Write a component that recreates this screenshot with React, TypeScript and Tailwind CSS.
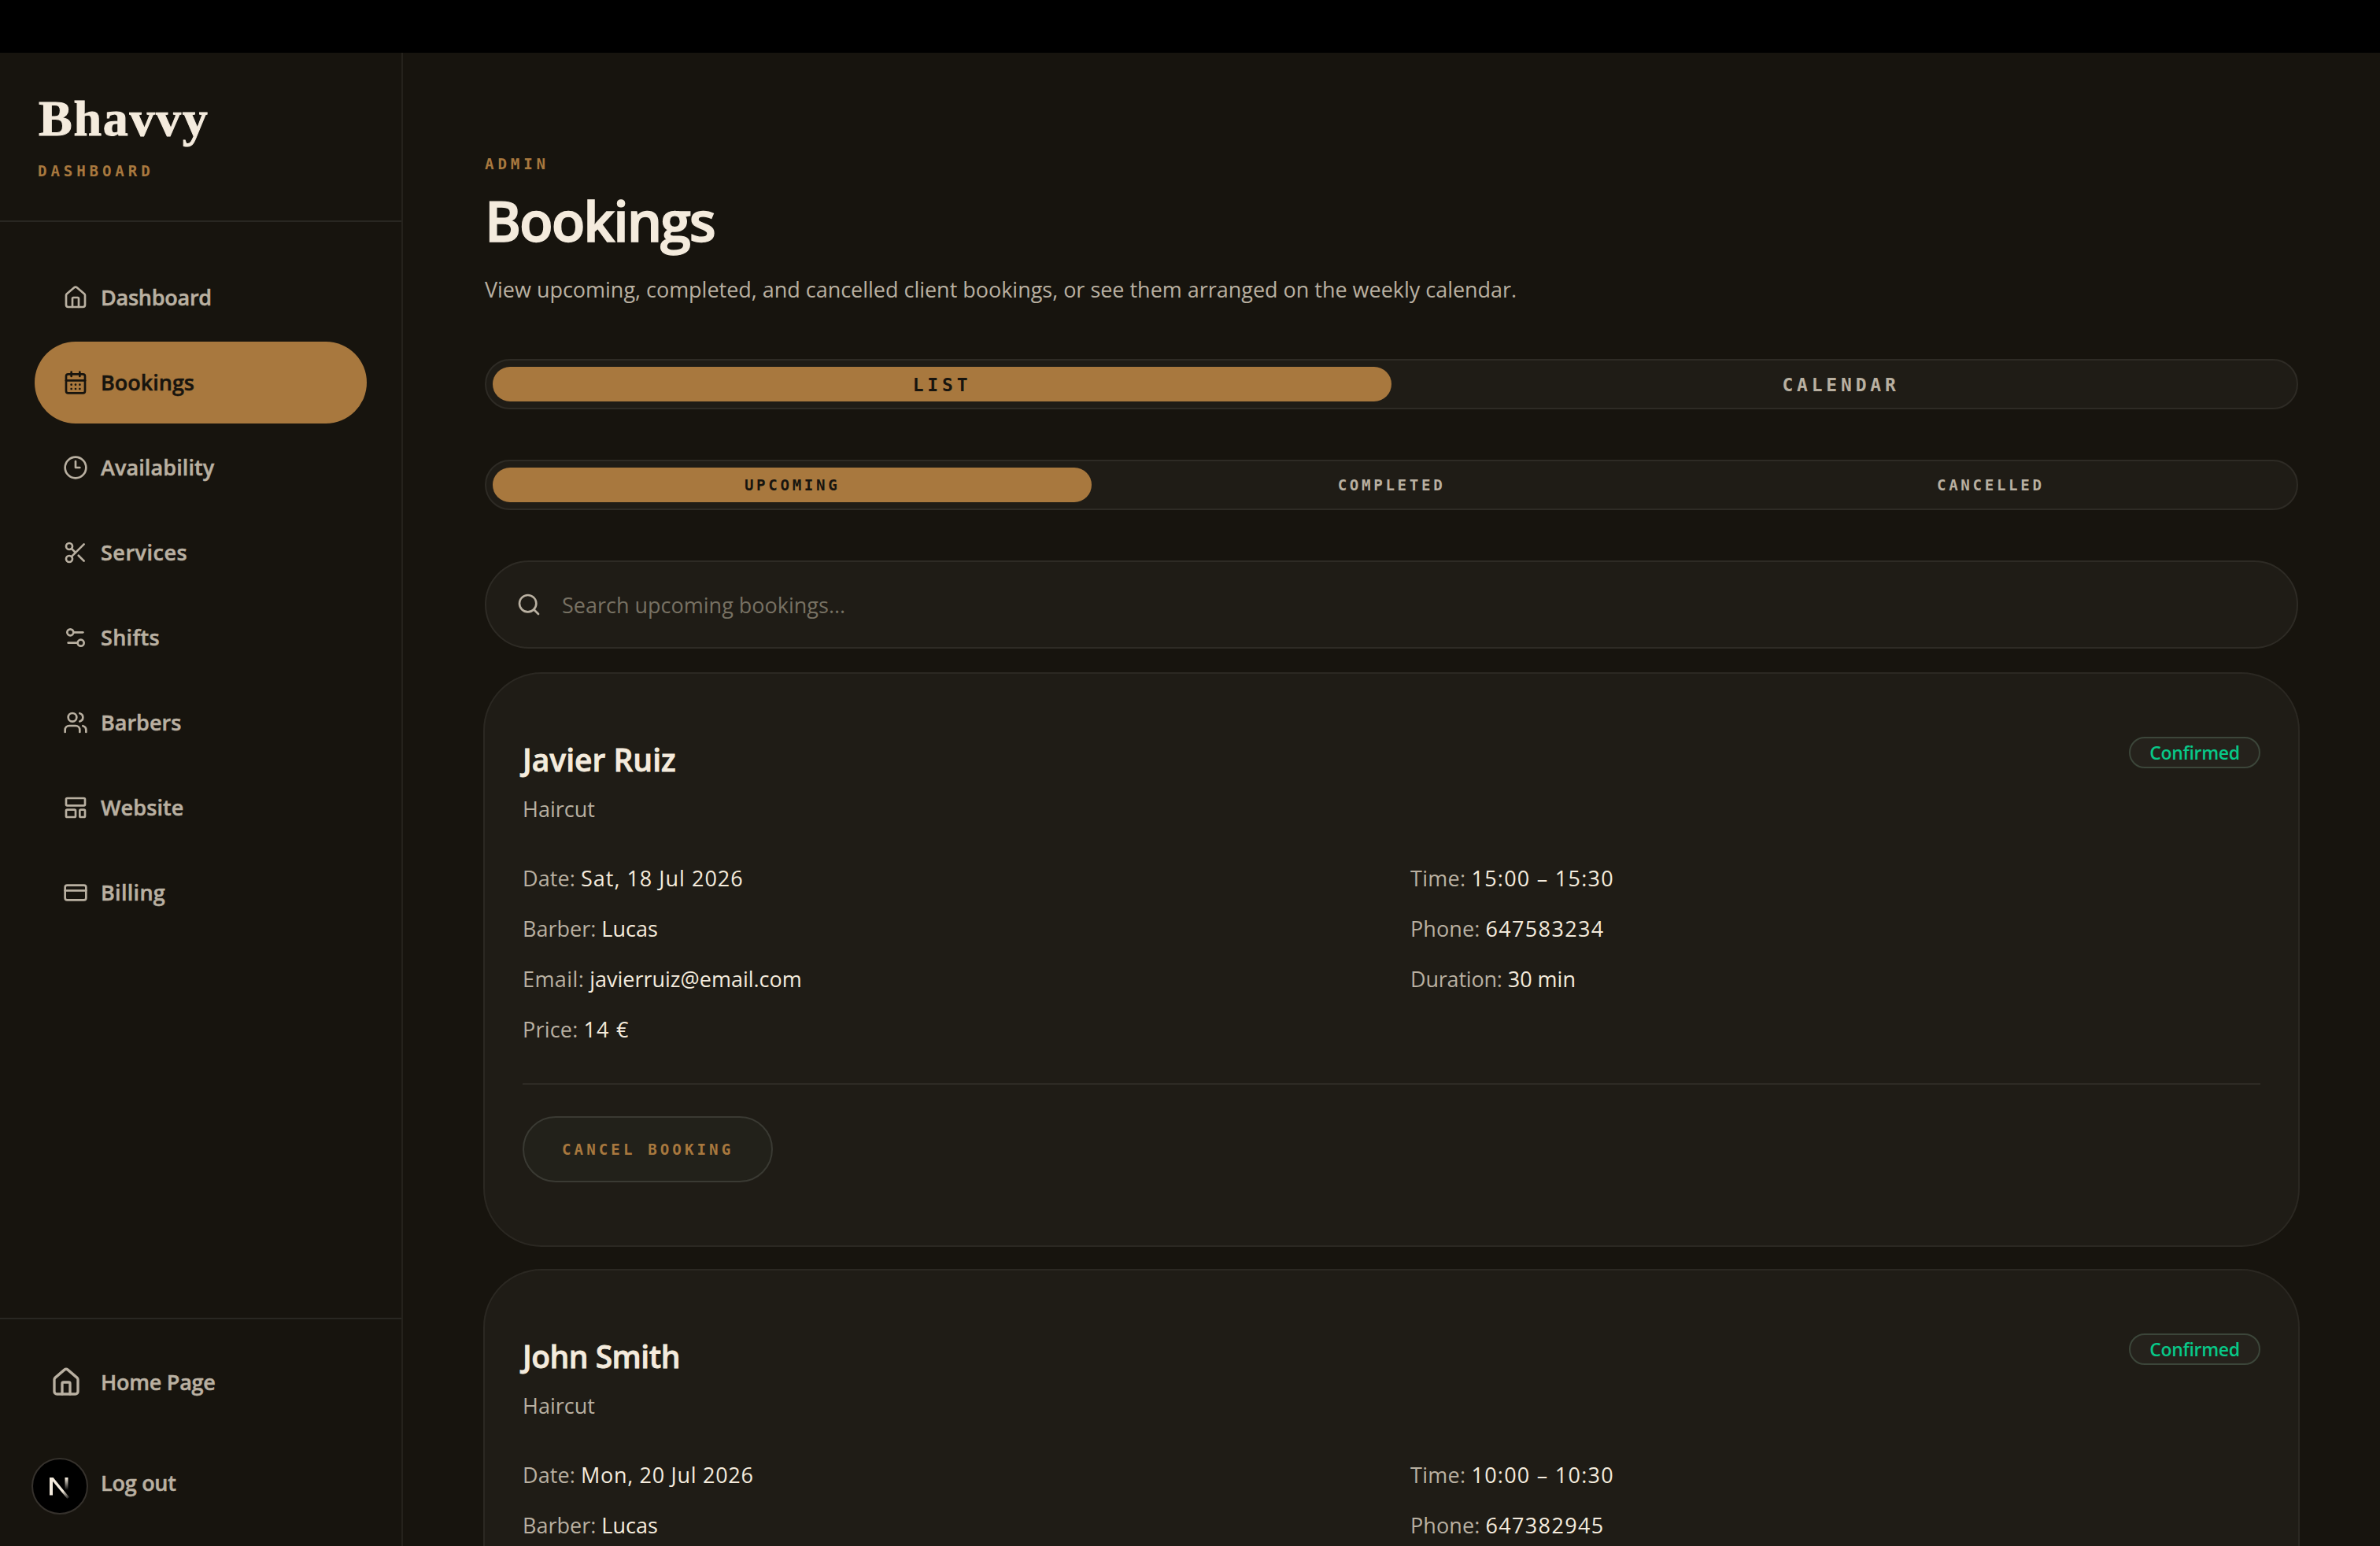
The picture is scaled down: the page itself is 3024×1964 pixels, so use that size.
import React from "react";
import {
  House,
  CalendarDays,
  Clock3,
  Scissors,
  Settings2,
  Users,
  LayoutTemplate,
  CreditCard,
  Search,
} from "lucide-react";

const mono = "font-['DejaVu_Sans_Mono','Courier_New',monospace] font-bold uppercase whitespace-nowrap";

const nav = [
  { label: "Dashboard", Icon: House, track: "tracking-[-0.25px]" },
  { label: "Bookings", Icon: CalendarDays, track: "tracking-[0px]", active: true },
  { label: "Availability", Icon: Clock3, track: "tracking-[0.1px]" },
  { label: "Services", Icon: Scissors, track: "tracking-[0.5px]" },
  { label: "Shifts", Icon: Settings2, track: "tracking-[0.3px]" },
  { label: "Barbers", Icon: Users, track: "tracking-[0px]" },
  { label: "Website", Icon: LayoutTemplate, track: "tracking-[0.1px]" },
  { label: "Billing", Icon: CreditCard, track: "tracking-[0.3px]" },
];

const bookings = [
  {
    name: "Javier Ruiz",
    nameTrack: "tracking-[0px]",
    service: "Haircut",
    details: [
      ["Date:", "Sat, 18 Jul 2026", "tracking-[1px]", "tracking-[0.1px]"],
      ["Time:", "15:00 – 15:30", "tracking-[1.25px]", "tracking-[0.3px]"],
      ["Barber:", "Lucas", "tracking-[0px]", "tracking-[0px]"],
      ["Phone:", "647583234", "tracking-[1.35px]", "tracking-[0.1px]"],
      ["Email:", "javierruiz@email.com", "tracking-[0px]", "tracking-[0.4px]"],
      ["Duration:", "30 min", "tracking-[0px]", "tracking-[-0.2px]"],
      ["Price:", "14 €", "tracking-[1.2px]", "tracking-[0.2px]"],
    ],
  },
  {
    name: "John Smith",
    nameTrack: "tracking-[-0.5px]",
    service: "Haircut",
    details: [
      ["Date:", "Mon, 20 Jul 2026", "tracking-[0.7px]", "tracking-[0.1px]"],
      ["Time:", "10:00 – 10:30", "tracking-[1.25px]", "tracking-[0.3px]"],
      ["Barber:", "Lucas", "tracking-[0px]", "tracking-[0px]"],
      ["Phone:", "647382945", "tracking-[1.35px]", "tracking-[0.1px]"],
    ],
  },
];

function Sidebar() {
  return (
    <aside className="flex h-full w-[512px] shrink-0 flex-col border-r-2 border-[#25221c]">
      <div className="flex h-[215px] shrink-0 flex-col border-b-2 border-[#292722] pl-12">
        <div className="mt-[44px] h-[80px] pl-px whitespace-nowrap font-['Liberation_Serif',serif] text-[64px] leading-[80px] font-bold tracking-[1.7px] text-[#f4ebdd] [-webkit-text-stroke:1px_#f4ebdd]">
          Bhavvy
        </div>
        <div className={`${mono} mt-[15px] text-[19.2px] leading-[24px] tracking-[4.84px] text-[#a8783e]`}>Dashboard</div>
      </div>
      <nav className="flex flex-1 flex-col gap-1 px-11 pt-[44px]">
        {nav.map(({ label, Icon, track, active }) => (
          <a
            key={label}
            className={`flex h-[104px] items-center gap-4 rounded-full px-9 text-[27px] font-semibold whitespace-nowrap [-webkit-text-stroke:0.5px_currentColor] ${track} ${
              active ? "bg-[#a8783e] text-[#17140e]" : "text-[#b9b0a1]"
            }`}
          >
            <Icon className="size-8" strokeWidth={2} />
            {label}
          </a>
        ))}
      </nav>
      <div className="flex h-[290px] shrink-0 flex-col border-t-2 border-[#292722] px-11 pt-[28px] text-[27px] font-semibold tracking-[-0.25px] text-[#b9b0a1] [-webkit-text-stroke:0.5px_currentColor]">
        <a className="flex h-[104px] items-center gap-6 pl-5 whitespace-nowrap">
          <House className="size-10" strokeWidth={2} />
          Home Page
        </a>
        <div className="relative mt-6 flex h-[104px] items-center pl-[84px] whitespace-nowrap">
          Log out
          <div className="absolute -left-1 top-[20px] flex size-[72px] items-center justify-center rounded-full border-2 border-[#35312c] bg-black">
            <NextMark />
          </div>
        </div>
      </div>
    </aside>
  );
}

function NextMark() {
  return (
    <svg className="size-[28px] overflow-visible" viewBox="0 0 28 28" fill="none">
      <defs>
        <linearGradient id="stem" x1="0" y1="4" x2="0" y2="19" gradientUnits="userSpaceOnUse">
          <stop stopColor="#f4ebdd" />
          <stop offset="1" stopColor="#f4ebdd" stopOpacity="0" />
        </linearGradient>
        <linearGradient id="slash" x1="18" y1="20" x2="26" y2="31" gradientUnits="userSpaceOnUse">
          <stop stopColor="#f4ebdd" />
          <stop offset="1" stopColor="#f4ebdd" stopOpacity="0" />
        </linearGradient>
      </defs>
      <rect x="1" y="3" width="4" height="22.5" fill="#f4ebdd" />
      <path d="M1 3h4.6L26 28l-2.6 2L1 3z" fill="url(#slash)" />
      <rect x="20.5" y="3" width="4" height="16" fill="url(#stem)" />
    </svg>
  );
}

function Tabs({ items, size }: { items: string[]; size: string }) {
  return (
    <div className="flex h-16 items-stretch rounded-full border-2 border-[#2e2b25] bg-[#1f1c16] p-2">
      {items.map((t, i) => (
        <button
          key={t}
          className={`${mono} ${size} flex-1 rounded-full pt-[2px] ${i === 0 ? "bg-[#a8783e] text-[#17140e]" : "text-[#b9b0a1]"}`}
        >
          {t}
        </button>
      ))}
    </div>
  );
}

function BookingCard({ b }: { b: (typeof bookings)[number] }) {
  return (
    <article className="flex h-[726px] shrink-0 flex-col rounded-[72px] bg-[#1f1c16] px-12 pt-[80px] ring-2 ring-[#2b2822]">
      <div className="flex items-start justify-between">
        <div>
          <h2
            className={`${b.nameTrack} pt-px text-[39px] leading-[56px] font-semibold whitespace-nowrap text-[#f4ebdd] [-webkit-text-stroke:0.8px_#f4ebdd]`}
          >
            {b.name}
          </h2>
          <p className="mt-[15px] text-[27px] leading-[40px] text-[#b9b0a1]">{b.service}</p>
        </div>
        <span className="flex h-10 w-[167px] items-center justify-center rounded-full border-2 border-[#3c463a] bg-[#25221c] text-[23px] font-semibold tracking-[-0.3px] text-[#08c888]">
          Confirmed
        </span>
      </div>
      <dl className="mt-[48px] grid grid-cols-2 gap-x-12 gap-y-6 text-[27px] leading-[40px]">
        {b.details.map(([k, v, track, labelTrack]) => (
          <div key={k} className="flex gap-[7px] whitespace-nowrap">
            <dt className={`${labelTrack} text-[#b9b0a1]`}>{k}</dt>
            <dd className={`${track} text-[#f4ebdd]`}>{v}</dd>
          </div>
        ))}
      </dl>
      <div className="mt-[48px] border-t-2 border-[#2e2b25] pt-10">
        <button
          className={`${mono} h-[84px] rounded-full border-2 border-[#3a3a33] bg-[#22211a] px-12 pt-[2px] text-[19.2px] tracking-[4.04px] text-[#a8783e]`}
        >
          Cancel booking
        </button>
      </div>
    </article>
  );
}

export default function App() {
  return (
    <div className="flex h-[1964px] w-[3024px] flex-col overflow-hidden bg-[#17140e] font-['Open_Sans',sans-serif] antialiased">
      <div className="h-[67px] shrink-0 bg-black" />
      <div className="flex min-h-0 flex-1">
        <Sidebar />
        <main className="flex min-w-0 flex-1 flex-col overflow-hidden px-[104px] pt-[130px]">
          <p className={`${mono} text-[19.2px] leading-[24px] tracking-[4.84px] text-[#a8783e]`}>Admin</p>
          <h1 className="mt-[14px] text-[70px] leading-[90px] font-semibold tracking-[-2.1px] text-[#f4ebdd] [-webkit-text-stroke:1.4px_#f4ebdd]">
            Bookings
          </h1>
          <p className="mt-[23px] text-[27px] leading-[40px] tracking-[-0.02px] whitespace-nowrap text-[#b9b0a1]">
            View upcoming, completed, and cancelled client bookings, or see them arranged on the weekly calendar.
          </p>
          <div className="mt-[68px] flex flex-col gap-16">
            <Tabs items={["List", "Calendar"]} size="text-[23px] tracking-[4.8px]" />
            <Tabs items={["Upcoming", "Completed", "Cancelled"]} size="text-[19.2px] tracking-[3.64px]" />
            <div className="flex h-28 items-center gap-[26px] rounded-full border-2 border-[#2e2b25] bg-[#1f1c16] pl-[38px]">
              <Search className="size-8 text-[#b9b0a1]" strokeWidth={2} />
              <span className="pt-[2px] text-[27px] text-[#777163]">Search upcoming bookings...</span>
            </div>
          </div>
          <div className="mt-8 flex flex-col gap-8">
            {bookings.map((b) => (
              <BookingCard key={b.name} b={b} />
            ))}
          </div>
        </main>
      </div>
    </div>
  );
}
